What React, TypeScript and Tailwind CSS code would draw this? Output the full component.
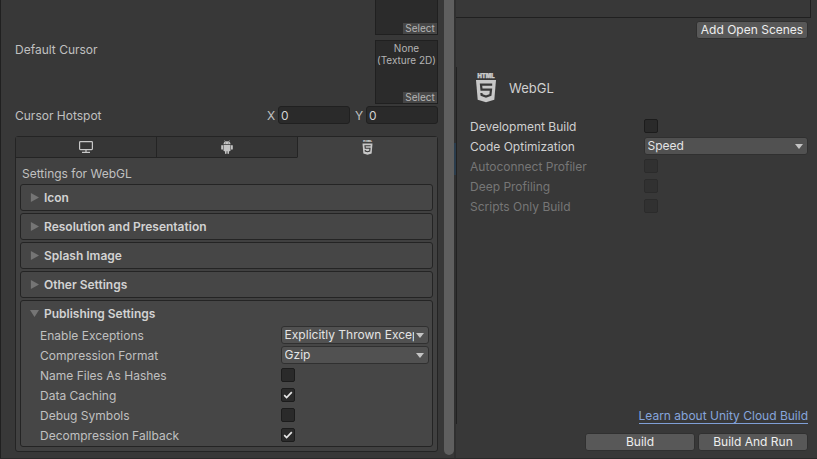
import { useState, type ReactNode } from "react";

const selectBase =
  "col-start-1 row-start-1 h-[18px] w-full min-w-0 appearance-none overflow-hidden rounded-[3px] border border-[#303030] bg-[#515151] pl-[3px] pr-[14px] text-[12px] leading-4 text-[#e4e4e4] outline-none";

function Dropdown({ id, options }: { id: string; options: string[] }) {
  return (
    <div className="grid w-full items-center">
      <select id={id} className={selectBase}>
        {options.map((o) => (
          <option key={o}>{o}</option>
        ))}
      </select>
      <svg
        viewBox="0 0 8 5"
        className="pointer-events-none col-start-1 row-start-1 mr-[5px] h-[5px] w-2 justify-self-end"
        aria-hidden="true"
      >
        <path d="M0 0h8L4 5z" fill="#c4c4c4" />
      </svg>
    </div>
  );
}

function Checkbox({ id, checked = false, disabled = false }: { id: string; checked?: boolean; disabled?: boolean }) {
  return (
    <div className="grid size-[14px] place-items-center">
      <input
        id={id}
        type="checkbox"
        defaultChecked={checked}
        disabled={disabled}
        className="peer col-start-1 row-start-1 size-[14px] appearance-none rounded-[2px] border border-[#1c1c1c] bg-[#2a2a2a] disabled:border-[#2b2b2b] disabled:bg-[#313131]"
      />
      <svg
        viewBox="0 0 10 8"
        className="pointer-events-none invisible col-start-1 row-start-1 h-2 w-[10px] peer-checked:visible"
        fill="none"
        aria-hidden="true"
      >
        <path d="M1.2 4.2 3.6 6.5 8.8 1.2" stroke="#e6e6e6" strokeWidth="1.7" />
      </svg>
    </div>
  );
}

function Html5Icon({ className }: { className: string }) {
  return (
    <svg viewBox="0 0 22 30" className={className} aria-hidden="true">
      <text
        x="11"
        y="4.8"
        textAnchor="middle"
        fontFamily="Inter, sans-serif"
        fontSize="5.8"
        fontWeight="900"
        fill="#c8c8c8"
        stroke="#c8c8c8"
        strokeWidth="0.4"
      >
        HTML
      </text>
      <path d="M1 7h20l-1.700 19.800L11 29.300 2.700 26.800z" fill="#c8c8c8" />
      <path
        d="M17.200 11.600H6l.5 5h9.500l-.6 5.400-4.400 1.500-4.400-1.500-.2-2"
        fill="none"
        stroke="#383838"
        strokeWidth="2.200"
      />
    </svg>
  );
}

function MonitorIcon() {
  return (
    <svg viewBox="0 0 14 12" className="h-3 w-[14px]" fill="none" aria-hidden="true">
      <rect x="0.6" y="0.6" width="12.800" height="8" rx="0.8" stroke="#c8c8c8" strokeWidth="1.200" />
      <path d="M7 9v2M3 11.400h8" stroke="#c8c8c8" strokeWidth="1.200" />
    </svg>
  );
}

function AndroidIcon() {
  return (
    <svg viewBox="0 0 12 14" className="h-[14px] w-3" fill="#c4c4c4" aria-hidden="true">
      <path d="M2.500 4.300a3.500 3 0 0 1 7 0z" />
      <path d="M3.500.4 4.500 2M8.500.4 7.500 2" stroke="#c4c4c4" strokeWidth=".6" />
      <path d="M2.500 4.900h7v5.600a.7.700 0 0 1-.7.700H8v2a.8.800 0 0 1-1.600 0v-2h-.8v2a.8.800 0 0 1-1.600 0v-2h-.8a.7.700 0 0 1-.7-.7z" />
      <rect x=".2" y="4.900" width="1.800" height="4.800" rx=".9" />
      <rect x="10" y="4.900" width="1.800" height="4.800" rx=".9" />
      <circle cx="4.600" cy="3" r=".4" fill="#383838" />
      <circle cx="7.400" cy="3" r=".4" fill="#383838" />
    </svg>
  );
}

function Foldout({ title, initial = false, children }: { title: string; initial?: boolean; children?: ReactNode }) {
  const [open, setOpen] = useState(initial);
  return (
    <section className="rounded-[3px] border border-[#242424] bg-[#464646]">
      <button
        type="button"
        aria-expanded={open}
        onClick={() => setOpen(!open)}
        className="flex h-[25px] w-full items-center gap-[5px] pl-[9px] text-left text-[12px] font-semibold text-[#d2d2d2]"
      >
        <svg viewBox="0 0 10 10" className="size-[9px]" fill="#757575" aria-hidden="true">
          {open ? <path d="M0 1h10L5 9z" /> : <path d="M1 0v10l9-5z" />}
        </svg>
        {title}
      </button>
      {open && children}
    </section>
  );
}

function SettingRow({ id, label, children }: { id: string; label: string; children: ReactNode }) {
  return (
    <div className="grid h-5 grid-cols-[240fr_148fr] items-center">
      <label htmlFor={id} className="pt-[2px]">{label}</label>
      {children}
    </div>
  );
}

function TextureSlot({ label }: { label?: string }) {
  return (
    <div className="flex h-16 w-[63px] shrink-0 flex-col justify-between border border-[#202020] bg-[#2b2b2b] text-[10px] leading-3 text-[#b4b4b4]">
      <div className="pt-px text-center whitespace-nowrap">
        {label && (
          <>
            None
            <br />
            {label}
          </>
        )}
      </div>
      <button type="button" className="h-[11px] w-[34px] self-end bg-[#474747] leading-[11px]">
        Select
      </button>
    </div>
  );
}

const axisInput =
  "h-[18px] w-[72px] rounded-[3px] border border-[#202020] bg-[#2a2a2a] px-[2px] text-[#d2d2d2] outline-none";

function PlayerSettings() {
  const tabs = [
    { name: "Standalone", icon: <MonitorIcon /> },
    { name: "Android", icon: <AndroidIcon /> },
    { name: "WebGL", icon: <Html5Icon className="h-[15px] w-[11px]" /> },
  ];
  return (
    <main className="flex min-w-0 border-l border-[#202020]">
      <div className="min-w-0 flex-1 pr-[6px] pb-[6px] pl-[14px]">
        <div className="flex h-[35px] items-end justify-end overflow-hidden">
          <TextureSlot />
        </div>
        <div className="mt-[5px] flex justify-between">
          <span className="leading-5">Default Cursor</span>
          <TextureSlot label="(Texture 2D)" />
        </div>
        <div className="mt-[2px] flex h-[18px] items-center">
          <span className="flex-1 pt-[2px]">Cursor Hotspot</span>
          <label htmlFor="hot-x" className="w-[11px] pt-[2px]">X</label>
          <input id="hot-x" defaultValue="0" className={axisInput} />
          <label htmlFor="hot-y" className="ml-[5px] w-[11px] pt-[2px]">Y</label>
          <input id="hot-y" defaultValue="0" className={axisInput} />
        </div>
        <div className="mt-3 rounded-[3px] border border-[#242424] bg-[#414141]">
          <div role="tablist" className="grid h-[21px] grid-cols-3">
            {tabs.map((t) => (
              <button
                key={t.name}
                type="button"
                role="tab"
                aria-label={t.name}
                aria-selected={t.name === "WebGL"}
                className="flex items-center justify-center border-b border-l border-[#242424] bg-[#363636] first:border-l-0 aria-selected:border-b-[#414141] aria-selected:bg-[#414141]"
              >
                {t.icon}
              </button>
            ))}
          </div>
          <div className="px-1 pb-1">
            <h2 className="pt-[6px] pl-[2px] leading-5">Settings for WebGL</h2>
            <div className="flex flex-col gap-[2px]">
              <Foldout title="Icon" />
              <Foldout title="Resolution and Presentation" />
              <Foldout title="Splash Image" />
              <Foldout title="Other Settings" />
              <Foldout title="Publishing Settings" initial>
                <div className="-mt-px pr-[3px] pb-px pl-[19px]">
                  <SettingRow id="exceptions" label="Enable Exceptions">
                    <Dropdown id="exceptions" options={["Explicitly Thrown Exceptions Only", "None"]} />
                  </SettingRow>
                  <SettingRow id="compression" label="Compression Format">
                    <Dropdown id="compression" options={["Gzip", "Brotli", "Disabled"]} />
                  </SettingRow>
                  <SettingRow id="hashes" label="Name Files As Hashes">
                    <Checkbox id="hashes" />
                  </SettingRow>
                  <SettingRow id="caching" label="Data Caching">
                    <Checkbox id="caching" checked />
                  </SettingRow>
                  <SettingRow id="symbols" label="Debug Symbols">
                    <Checkbox id="symbols" />
                  </SettingRow>
                  <SettingRow id="fallback" label="Decompression Fallback">
                    <Checkbox id="fallback" checked />
                  </SettingRow>
                </div>
              </Foldout>
            </div>
          </div>
        </div>
      </div>
      <div className="mb-[3px] w-[10px] shrink-0 rounded-b-full bg-[#5f5f5f]" />
      <div className="w-[2px] shrink-0 bg-[#303030] pt-[143px]">
        <div className="h-8 bg-[#2a3c4c]" />
      </div>
    </main>
  );
}

function BuildRow({ id, label, disabled = false, children }: { id: string; label: string; disabled?: boolean; children: ReactNode }) {
  return (
    <div className="grid h-5 grid-cols-[173fr_164fr] items-center">
      <label htmlFor={id} className={disabled ? "pt-[2px] text-[#767676]" : "pt-[2px] text-[#d0d0d0]"}>
        {label}
      </label>
      {children}
    </div>
  );
}

const buttonLook = "h-[18px] rounded-[3px] border border-[#303030] bg-[#585858] leading-4 text-[#eeeeee]";

function BuildSettings() {
  return (
    <aside className="flex min-w-0 flex-col pb-[7px]">
      <div className="mr-[6px] h-[18px] border-r border-b border-[#202020]" />
      <div className="mt-[3px] flex justify-end pr-[9px]">
        <button type="button" className={`${buttonLook} w-[112px]`}>
          Add Open Scenes
        </button>
      </div>
      <div className="mt-7 flex flex-1 flex-col border-l border-[#222222] pr-[9px] pl-[13px]">
        <div className="flex h-[42px] items-center gap-3 pl-[5px]">
          <Html5Icon className="h-[30px] w-[22px]" />
          <h2 className="text-[13px] text-[#d0d0d0]">WebGL</h2>
        </div>
        <div className="mt-[7px]">
          <BuildRow id="development" label="Development Build">
            <Checkbox id="development" />
          </BuildRow>
          <BuildRow id="optimization" label="Code Optimization">
            <Dropdown id="optimization" options={["Speed", "Size"]} />
          </BuildRow>
          <BuildRow id="autoconnect" label="Autoconnect Profiler" disabled>
            <Checkbox id="autoconnect" disabled />
          </BuildRow>
          <BuildRow id="deep" label="Deep Profiling" disabled>
            <Checkbox id="deep" disabled />
          </BuildRow>
          <BuildRow id="scripts" label="Scripts Only Build" disabled>
            <Checkbox id="scripts" disabled />
          </BuildRow>
        </div>
        <a
          href="#cloud-build"
          className="mt-auto self-end border-b border-[#7f9fd6] leading-[15px] text-[#86a5dc]"
        >
          Learn about Unity Cloud Build
        </a>
      </div>
      <div className="mt-[9px] flex justify-end gap-[3px] pr-[9px]">
        <button type="button" className={`${buttonLook} w-[110px]`}>Build</button>
        <button type="button" className={`${buttonLook} w-[110px]`}>Build And Run</button>
      </div>
    </aside>
  );
}

export default function App() {
  return (
    <div className="grid min-h-screen grid-cols-[456fr_361fr] border-b border-[#2a2a2a] bg-[#383838] font-['Inter',sans-serif] text-[12px] leading-4 text-[#c0c0c0]">
      <PlayerSettings />
      <BuildSettings />
    </div>
  );
}
